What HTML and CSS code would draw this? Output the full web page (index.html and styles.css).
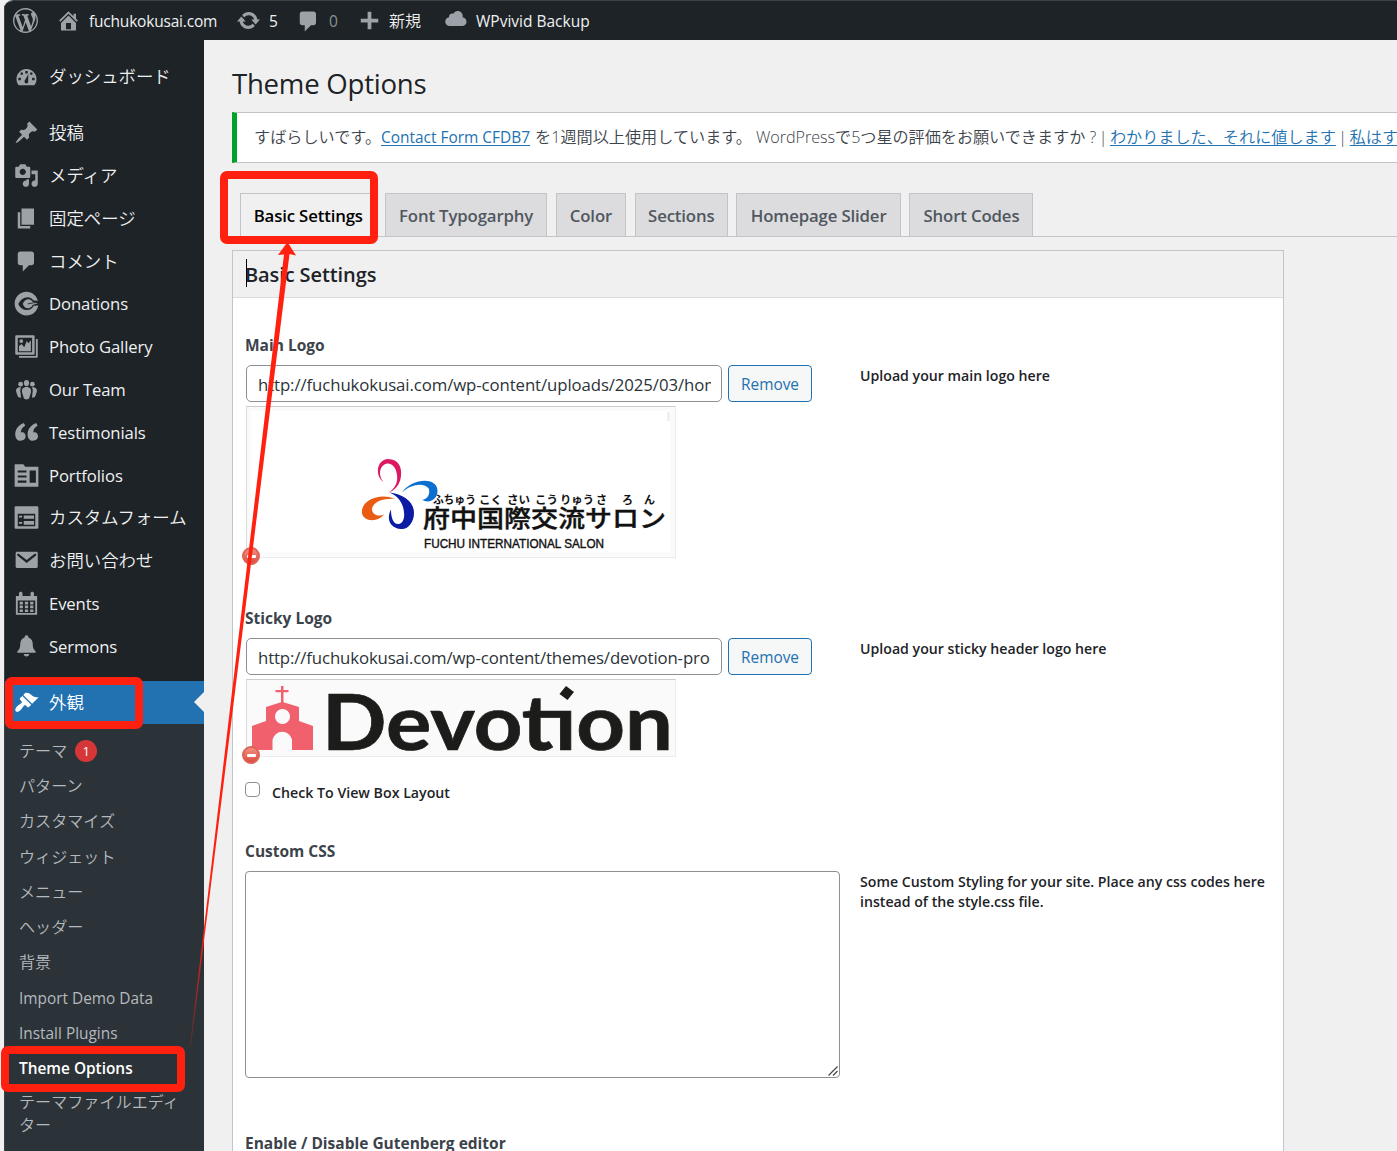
FILE: index.html
```html
<!DOCTYPE html>
<html lang="ja">
<head>
<meta charset="utf-8">
<title>Theme Options</title>
<link rel="stylesheet" href="styles.css">
</head>
<body>
<div class="window">
  <header class="adminbar">
    <svg class="icon wp" viewBox="0 0 20 20"><path d="M20 10c0-5.51-4.49-10-10-10C4.48 0 0 4.49 0 10c0 5.52 4.48 10 10 10 5.51 0 10-4.48 10-10zM7.78 15.37L4.37 6.22c.55-.02 1.17-.08 1.17-.08.5-.06.44-1.13-.06-1.11 0 0-1.45.11-2.37.11-.18 0-.37 0-.58-.01C4.12 2.69 6.87 1.11 10 1.11c2.33 0 4.45.87 6.05 2.34-.68-.11-1.65.39-1.65 1.58 0 .74.45 1.36.9 2.1.35.61.55 1.36.55 2.46 0 1.49-1.4 5-1.4 5l-3.03-8.37c.54-.02.82-.17.82-.17.5-.05.44-1.25-.06-1.22 0 0-1.44.12-2.38.12-.87 0-2.33-.12-2.33-.12-.5-.03-.56 1.2-.06 1.22l.92.08 1.26 3.41zM17.41 10c.24-.64.74-1.87.43-4.25.7 1.29 1.05 2.71 1.05 4.25 0 3.29-1.73 6.24-4.4 7.78.97-2.59 1.94-5.2 2.92-7.78zM6.1 18.09C3.12 16.65 1.11 13.53 1.11 10c0-1.3.23-2.48.72-3.59C3.25 10.3 4.67 14.2 6.1 18.09zm4.03-6.63l2.58 6.98c-.86.29-1.76.45-2.71.45-.79 0-1.57-.11-2.29-.33.81-2.38 1.62-4.74 2.42-7.1z"/></svg>
    <div class="bar-item site"><svg class="icon" viewBox="0 0 20 20"><path d="M16 8.5l1.53 1.53-1.06 1.06L10 4.6l-6.47 6.49-1.06-1.06L10 2.5l4 4v-2h2v4zm-6-2.46l6 5.99V18H4v-5.97zM12 17v-5H8v5h4z"/></svg><span>fuchukokusai.com</span></div>
    <div class="bar-item updates"><svg class="icon" viewBox="0 0 20 20"><path d="M10.2 3.28c3.53 0 6.43 2.61 6.92 6h2.08l-3.5 4-3.5-4h2.32c-.45-1.97-2.21-3.45-4.32-3.45-1.45 0-2.73.71-3.54 1.78L4.95 5.66C6.23 4.2 8.11 3.28 10.2 3.28zm-.4 13.44c-3.52 0-6.43-2.61-6.92-6H.8l3.5-4c1.17 1.33 2.33 2.67 3.5 4H5.48c.45 1.97 2.21 3.45 4.32 3.45 1.45 0 2.73-.71 3.54-1.78l1.71 1.95c-1.28 1.46-3.15 2.38-5.25 2.38z"/></svg><span>5</span></div>
    <div class="bar-item comments"><svg class="icon" viewBox="0 0 20 20"><path d="M5 2h9c1.1 0 2 .9 2 2v7c0 1.1-.9 2-2 2h-2l-5 5v-5H5c-1.1 0-2-.9-2-2V4c0-1.1.9-2 2-2z"/></svg><span class="dim">0</span></div>
    <div class="bar-item new"><svg class="icon" viewBox="0 0 20 20"><path d="M17 8.500v3h-5.500v5.500h-3v-5.500H3v-3h5.500V3h3v5.500z"/></svg><span class="cjk">新規</span></div>
    <div class="bar-item backup"><svg class="icon cloud" viewBox="0 0 20 20"><path d="M14.900 9c1.800.2 3.100 1.700 3.100 3.500 0 1.900-1.600 3.500-3.500 3.500h-10C2.600 16 1 14.400 1 12.500 1 10.700 2.300 9.300 4.100 9 4 8.900 4 8.700 4 8.500 4 7.100 5.100 6 6.500 6c.3 0 .7.1.9.2C8.100 4.900 9.400 4 11 4c2.200 0 4 1.800 4 4 0 .4-.1.700-.1 1z"/></svg><span>WPvivid Backup</span></div>
  </header>

  <div class="body">
    <nav class="sidebar">
      <ul class="menu">
        <li class="cjk first"><svg class="icon" viewBox="0 0 20 20"><path fill-rule="evenodd" d="M3.760 17h12.480C17.580 15.370 18 13.650 18 12c0-4.410-3.580-8-8-8s-8 3.590-8 8c0 1.650.42 3.370 1.760 5zM9 5.500h2v2H9zM5.300 6.800h1.800v1.800H5.300zM12.900 6.800h1.800v1.800h-1.800zM3.500 11h2v2h-2zM14.500 11h2v2h-2zM11.500 8l-.2 5c.5 1.500-.3 2.500-1.300 2.500s-2-1-1.500-2.200z"/></svg><span>ダッシュボード</span></li>
        <li class="cjk"><svg class="icon" viewBox="0 0 20 20"><path d="M10.440 3.020l1.820-1.820 6.360 6.350-1.830 1.820c-1.050-.68-2.480-.57-3.410.36l-.75.75c-.92.93-1.040 2.350-.35 3.410l-1.830 1.820-2.410-2.410-2.800 2.790c-.42.42-3.380 2.710-3.800 2.290s1.860-3.390 2.280-3.810l2.790-2.790L4.100 9.360l1.830-1.820c1.050.69 2.480.57 3.400-.36l.75-.75c.93-.92 1.050-2.350.36-3.410z"/></svg><span>投稿</span></li>
        <li class="cjk"><svg class="icon" viewBox="0 0 20 20"><path d="M13 11V4c0-.55-.45-1-1-1h-1.670L9 1H5L3.670 3H2c-.55 0-1 .45-1 1v7c0 .55.45 1 1 1h10c.55 0 1-.45 1-1zM7 4.500c1.380 0 2.500 1.120 2.500 2.500S8.380 9.500 7 9.500 4.500 8.380 4.500 7 5.620 4.500 7 4.500zM14 6h5v10.500c0 1.380-1.120 2.500-2.500 2.500S14 17.880 14 16.500s1.120-2.500 2.500-2.500c.17 0 .34.02.5.05V9h-3V6zm-4 8.050V13h2v3.500c0 1.380-1.120 2.500-2.500 2.500S7 17.880 7 16.500 8.120 14 9.500 14c.17 0 .34.02.5.05z"/></svg><span>メディア</span></li>
        <li class="cjk"><svg class="icon" viewBox="0 0 20 20"><path d="M6 15V2h10v13H6zm-1 1h8v2H3V5h2v11z"/></svg><span>固定ページ</span></li>
        <li class="cjk"><svg class="icon" viewBox="0 0 20 20"><path d="M5 2h9c1.100 0 2 .9 2 2v7c0 1.100-.9 2-2 2h-2l-5 5v-5H5c-1.100 0-2-.9-2-2V4c0-1.100.9-2 2-2z"/></svg><span>コメント</span></li>
        <li><svg class="icon" viewBox="0 0 20 20"><path fill-rule="evenodd" d="M10 .5C4.700.5.500 4.700.5 10s4.200 9.500 9.500 9.500c4.700 0 8.600-3.300 9.400-8l-3.600.3c-1.200 2.200-3 3.400-5.300 3.400-3.300 0-5.500-1.700-7.100-4.900C5.300 6.900 7.700 5 10.800 5c2 0 3.600.9 4.600 2.300L19.100 8C18.200 3.600 14.500.5 10 .5z"/><path d="M7 10.300C7.800 7.800 9.600 6.500 11.500 6.500c1.600 0 2.700.8 3.300 2L19.400 9.500l-4.500 1.700c-.8 1.700-2 2.500-3.700 2.500-1.900 0-3.300-1.200-4.200-3.400z"/><path d="M11 10.300l8.500-1.500" stroke="#1d2327" stroke-width=".7"/></svg><span>Donations</span></li>
        <li><svg class="icon" viewBox="0 0 20 20"><path fill-rule="evenodd" d="M2 1h13.500c.6 0 1 .4 1 1v13.500c0 .6-.4 1-1 1H2c-.6 0-1-.4-1-1V2c0-.6.4-1 1-1zm1 2v11.500h11.500V3z"/><path d="M4 13.700V9.500l2-1.500 2.200 2.600 2-5 1.300 1.800L13.500 5v8.700zM17.500 4H19v14c0 .6-.4 1-1 1H4v-1.500h13.500z"/><circle cx="5.800" cy="5.600" r="1.500"/></svg><span>Photo Gallery</span></li>
        <li><svg class="icon" viewBox="0 0 20 20"><circle cx="5.300" cy="5.700" r="1.900"/><circle cx="14.700" cy="5.700" r="1.900"/><ellipse cx="10" cy="4.800" rx="2.100" ry="2.500"/><path d="M10 8c3 0 4.100 1.800 3.500 4.300l-1.300 4.500c-.4 1.500-4 1.500-4.400 0l-1.300-4.500C5.900 9.800 7 8 10 8z"/><path d="M5.800 8.200c-2.900-.3-4.700 1.300-4 3.800L3 15.300c.3.800 1.300 1.100 2.600 1.200L5.300 13c-.6-1.800-.3-3.700.5-4.800zM14.200 8.200c2.900-.3 4.700 1.300 4 3.800L17 15.300c-.3.800-1.300 1.100-2.600 1.200l.3-3.500c.6-1.800.3-3.700-.5-4.800z"/></svg><span>Our Team</span></li>
        <li><svg class="icon quote" viewBox="0 0 20 20"><path id="q" d="M9.300 13c0-.8-.2-1.500-.6-2.100-.7-1-2.100-1.200-3.200-1C5.400 7.600 6.800 5.500 9 4.500L7.900 2.300C4 3.700.6 7.200 1 11.900c.2 3 1.900 4.600 4.200 4.600 2.400 0 4.100-1.500 4.100-3.500z"/><use href="#q" x="9.900"/></svg><span>Testimonials</span></li>
        <li><svg class="icon" viewBox="0 0 20 20"><path fill-rule="evenodd" d="M1 1h6.500l1.500 2H19c.5 0 .5.300.5.500V18.500c0 .3-.2.500-.5.500H1c-.3 0-.5-.2-.5-.5V1.500c0-.3.200-.5.500-.5zM3 6v1.500h7V6zm0 4v1.500h7V10zm0 4v1.700h7V14zM12.500 6v9.700h5V6z"/></svg><span>Portfolios</span></li>
        <li class="cjk"><svg class="icon" viewBox="0 0 20 20"><path fill-rule="evenodd" d="M1.500 1h17c.6 0 1 .4 1 1v16c0 .6-.4 1-1 1h-17c-.6 0-1-.4-1-1V2c0-.6.4-1 1-1zM3 7v10h14V7zM4 8.500h2.500V10H4zm3.800-.2H16V11H7.800zM4 13.500h2.500V15H4zm3.800-.7H16v3H7.800z"/></svg><span>カスタムフォーム</span></li>
        <li class="cjk"><svg class="icon" viewBox="0 0 20 20"><path fill-rule="evenodd" d="M2.500 3h15.300c.7 0 1.200.5 1.200 1.200v10.600c0 .7-.5 1.200-1.200 1.200H2.500c-.7 0-1.200-.5-1.200-1.200V4.200c0-.7.5-1.200 1.200-1.200zm.3 1.700c-.5.400-.3 1 .1 1.400l7.200 5.900 7.300-5.900c.4-.4.600-1 .1-1.400-.4-.3-.9-.2-1.200.1l-6.200 4.800L4 4.800c-.3-.3-.8-.4-1.200-.1z"/></svg><span>お問い合わせ</span></li>
        <li><svg class="icon" viewBox="0 0 20 20"><path fill-rule="evenodd" d="M2 4h2V2c0-1.800 2.800-1.800 2.800 0v2h6.400V2c0-1.800 2.800-1.800 2.800 0v2h2.500v15h-17V4zM3 7.500v10h14v-10z"/><path d="M4.500 8.500h2.600v2.200H4.500zm4.200 0h2.600v2.200H8.700zm4.200 0h2.600v2.200h-2.600zM4.500 11.600h2.600v2.200H4.500zm4.200 0h2.600v2.200H8.700zm4.200 0h2.600v2.200h-2.600zM4.500 14.700h2.600v2H4.500zm4.200 0h2.600v2H8.700zm4.200 0h2.600v2h-2.600z"/></svg><span>Events</span></li>
        <li><svg class="icon" viewBox="0 0 20 20"><path d="M10 1c1 0 1.500.7 1.500 1.700C14 3.500 15 5.500 15 8.200c0 3 .8 4.400 2.300 5.600V15H2.700v-1.200C4.200 12.600 5 11.200 5 8.200c0-2.700 1-4.700 3.500-5.500C8.500 1.700 9 1 10 1zM7.800 16h4.400c0 1.200-.9 2-2.200 2s-2.200-.8-2.200-2z"/></svg><span>Sermons</span></li>
        <li class="cjk current"><svg class="icon" viewBox="0 0 20 20"><path d="M14.480 11.060L7.410 3.990l1.500-1.500c.5-.56 2.300-.47 3.510.32 1.210.8 1.430 1.280 2.910 2.100 1.180.64 2.450 1.260 4.450.85zm-.71.71L6.700 4.700 4.930 6.470c-.39.39-.39 1.020 0 1.410l1.060 1.060c.39.39.39 1.030 0 1.420-.6.6-1.430 1.110-2.210 1.690-.35.26-.7.53-1.010.84C1.430 14.230.4 16.080 1.400 17.070c.99 1 2.840-.03 4.180-1.360.31-.31.58-.66.85-1.020.57-.78 1.080-1.610 1.690-2.210.39-.39 1.020-.39 1.410 0l1.060 1.060c.39.39 1.020.39 1.410 0z"/></svg><span>外観</span></li>
      </ul>
      <ul class="submenu">
        <li>テーマ<b class="count">1</b></li>
        <li>パターン</li>
        <li>カスタマイズ</li>
        <li>ウィジェット</li>
        <li>メニュー</li>
        <li>ヘッダー</li>
        <li>背景</li>
        <li class="latin">Import Demo Data</li>
        <li class="latin">Install Plugins</li>
        <li class="latin active">Theme Options</li>
        <li class="wrap">テーマファイルエディター</li>
      </ul>
    </nav>

    <main class="content">
      <h1>Theme Options</h1>
      <div class="notice"><span class="n1">すばらしいです。</span><a class="n2">Contact Form CFDB7</a><span class="n3">を1週間以上使用しています。</span><span class="n4">WordPressで5つ星の評価をお願いできますか ?</span><span class="sep">|</span><a>わかりました、それに値します</a><span class="sep">|</span><a>私はす</a></div>
      <div class="tabs">
        <div class="tab on t1">Basic Settings</div>
        <div class="tab t2">Font Typogarphy</div>
        <div class="tab t3">Color</div>
        <div class="tab t4">Sections</div>
        <div class="tab t5">Homepage Slider</div>
        <div class="tab t6">Short Codes</div>
      </div>
      <section class="panel">
        <h2><i class="caret"></i><span>Basic Settings</span></h2>
        <div class="field main-logo">
          <h3>Main Logo</h3>
          <div class="row">
            <div class="control">
              <div class="upload"><div class="input"><span class="url">http://fuchukokusai.com/wp-content/uploads/2025/03/hom</span></div><div class="button">Remove</div></div>
              <div class="preview">
                <svg class="salon" viewBox="0 0 430 152">
                  <rect x="5" y="5" width="419" height="141" fill="#fff"/>
                  <path d="M422.500 6v9" stroke="#e6eaea" stroke-width="2"/>
                  <path fill="#dc1a64" d="M137.500 76C129 70 130 54 142 53C153 53 156 62 155 70C154 79 149 84 143 86.500C149 82 152 77 151 69C150 60 145 57 141 57.500C133 59 132 70 137.500 76z"/>
                  <path fill="#0b6fd0" d="M156 86.500C165 73 190 70 191.500 84C192 93 184 98 176 94C182 93 184 88 183 83C178 76 165 78 156 86.500z"/>
                  <path fill="#ea5b13" d="M149 93C137 87 118 92 116 104C114 115 131 118 138 108.500C133 111 126 109 126 103C127 96 137 92 149 93z"/>
                  <path fill="#0c1ba4" d="M143 86.500C158 88 168 96 168 107C168 117 161 124 155 123C144 122 140 113 145 103.500C145 113 148 119 153 118C159 116 159 108 157 101C155 94 150 89 143 86.500z"/>
                  <g class="ruby">
                    <text x="187" y="98" textLength="43" lengthAdjust="spacingAndGlyphs">ふちゅう</text><text x="233" y="98" textLength="23" lengthAdjust="spacingAndGlyphs">こく</text><text x="261" y="98" textLength="23" lengthAdjust="spacingAndGlyphs">さい</text><text x="289" y="98" textLength="23" lengthAdjust="spacingAndGlyphs">こう</text><text x="314" y="98" textLength="34" lengthAdjust="spacingAndGlyphs">りゅう</text><text x="350" y="98">さ</text><text x="376" y="98">ろ</text><text x="398" y="98">ん</text>
                  </g>
                  <text class="salon-name" x="177" y="121" textLength="243" lengthAdjust="spacingAndGlyphs">府中国際交流サロン</text>
                  <text class="salon-en" x="178" y="141.500" textLength="180" lengthAdjust="spacingAndGlyphs">FUCHU INTERNATIONAL SALON</text>
                </svg>
                <i class="minus"></i>
              </div>
            </div>
            <p class="desc">Upload your main logo here</p>
          </div>
        </div>
        <div class="field sticky-logo">
          <h3>Sticky Logo</h3>
          <div class="row">
            <div class="control">
              <div class="upload"><div class="input"><span class="url tight">http://fuchukokusai.com/wp-content/themes/devotion-pro</span></div><div class="button">Remove</div></div>
              <div class="preview">
                <svg class="devotion" viewBox="0 0 430 78">
                  <path fill="#f0616d" fill-rule="evenodd" d="M35 7h2.500v4H42.500v2.200h-5v10L53 28v14l14 5v24H46V60.500a10 10 0 0 0-19.500 0V71H6V47l14-5V28l15-4.800V13.200h-5.500V11H35zM36.500 30a7.500 7.500 0 1 0 .01 0z"/>
                  <text x="76" y="70.500" textLength="351" lengthAdjust="spacingAndGlyphs">Devot&#305;on</text>
                  <path fill="#1c1c1a" d="M320 7l8 6-6.500 8-8-6z"/>
                </svg>
                <i class="minus"></i>
              </div>
            </div>
            <p class="desc">Upload your sticky header logo here</p>
          </div>
          <label class="check"><i class="box"></i><span>Check To View Box Layout</span></label>
        </div>
        <div class="field custom-css">
          <h3>Custom CSS</h3>
          <div class="row">
            <div class="textarea"><svg viewBox="0 0 10 10"><path d="M.5 9.500l9-9M5 9.500L9.500 5" stroke="#444" stroke-width="1.200" fill="none"/></svg></div>
            <p class="desc">Some Custom Styling for your site. Place any css codes here<br>instead of the style.css file.</p>
          </div>
        </div>
        <div class="field gutenberg"><h3>Enable / Disable Gutenberg editor</h3></div>
      </section>
    </main>
  </div>
</div>

<svg class="annotations" viewBox="0 0 1397 1151">
  <defs><linearGradient id="fade" gradientUnits="userSpaceOnUse" x1="190" y1="1050" x2="203" y2="925"><stop offset="0" stop-color="#ff2010" stop-opacity=".15"/><stop offset="1" stop-color="#ff2010"/></linearGradient></defs>
  <path d="M189.800 1047L284 254.500l-6 .5 9.500-13 8.500 13.500-6.500-1.500L190.800 1047z" fill="url(#fade)"/>
  <g fill="none" stroke="#ff2010" stroke-width="8">
    <rect x="224" y="175" width="150" height="65" rx="3"/>
    <rect x="9" y="681" width="130" height="44" rx="3"/>
    <rect x="5" y="1050" width="176" height="38" rx="3"/>
  </g>
</svg>
</body>
</html>
```
FILE: styles.css
```css
* { box-sizing: border-box; }
body {
  margin: 0;
  width: 1397px;
  height: 1151px;
  overflow: hidden;
  position: relative;
  background: #f0f0f1;
  color: #3c434a;
  font-family: "Open Sans", "Noto Sans CJK JP", sans-serif;
  font-size: 16px;
}
ul, h1, h2, h3, p { margin: 0; padding: 0; list-style: none; }
.window { margin-left: 4px; width: 1393px; height: 1151px; border-top: 1px solid #3b4246; border-radius: 9px 0 0 0; overflow: hidden; background: #f0f0f0; }
.icon { width: 25px; height: 25px; fill: #9ca2a7; flex: none; display: block; }
.cjk, .submenu, .notice { font-family: "Open Sans", "Noto Sans CJK JP", sans-serif; font-weight: 350; }

.adminbar { height: 39px; background: #1d2327; color: #f0f0f1; display: flex; align-items: center; border-left: 1px solid #3b4246; }
.bar-item { display: flex; align-items: center; white-space: nowrap; font-size: 15.500px; line-height: 38px; }
.wp { margin-left: 8px; }
.bar-item.site { margin-left: 18px; gap: 8px; width: 180px; letter-spacing: -.2px; }
.bar-item.updates { gap: 8px; width: 60px; }
.bar-item.comments { gap: 8px; width: 61px; }
.comments .icon { width: 25px; margin-top: 2px; }
.bar-item.new { gap: 7px; width: 87px; }
.bar-item.backup { gap: 7px; }
.cloud { margin-top: -5px; }
.dim { color: #8c9196; }
.adminbar .cjk { font-weight: 350; font-size: 16px; }

.body { display: flex; height: 1111px; }
.sidebar { width: 200px; background: #2c3338; flex: none; border-left: 1px solid #3b4246; }
.menu { background: #1d2327; color: #f0f0f1; padding-top: 15px; }
.menu li { display: flex; align-items: center; gap: 10px; height: 42.800px; padding-left: 9px; font-size: 16.700px; letter-spacing: -.12px; white-space: nowrap; }
.menu li.cjk { font-size: 17.400px; letter-spacing: 0; }
.menu li.cjk span { margin-top: -2px; }
.menu li.first { margin-bottom: 13.500px; }
.menu li.current { margin-top: 13.400px; background: #2271b1; color: #fff; position: relative; }
.menu li.current .icon { fill: #fff; }
.menu li.current::after { content: ""; position: absolute; right: 0; top: 11px; border: 10px solid transparent; border-left-width: 0; border-right-color: #f0f0f0; }
.submenu { padding-top: 10px; color: #b4b9be; font-size: 16.100px; }
.submenu li { height: 35.250px; line-height: 35px; padding-left: 14px; display: flex; align-items: center; white-space: nowrap; }
.submenu .latin { font-weight: 400; font-size: 15.400px; }
.submenu .active { font-weight: 600; color: #fff; }
.submenu li.wrap { display: block; height: 50px; line-height: 23px; padding-top: 5px; width: 176px; white-space: normal; word-break: break-all; }
.count { width: 22px; height: 22px; margin-left: 8px; border-radius: 50%; background: #d63638; color: #fff; font-size: 13px; line-height: 22px; text-align: center; font-weight: 400; }

.content { flex: 1; min-width: 0; padding-left: 28px; overflow: hidden; }
h1 { color: #1d2327; font-weight: 400; font-size: 27.600px; letter-spacing: -.25px; line-height: 38px; padding-top: 24px; height: 72px; white-space: nowrap; }
.notice { height: 51px; border: 1px solid #c3c4c7; border-left: 5px solid #00a32a; border-right: 0; background: #fff; display: flex; align-items: baseline; padding: 12px 0 0 17px; line-height: 24px; white-space: nowrap; font-size: 16.150px; overflow: hidden; color: #3c434a; }
.notice a { color: #2271b1; text-decoration: underline; text-underline-offset: 2px; }
.notice .n2 { font-weight: 400; font-size: 15.450px; }
.n3 { margin-left: 5px; }
.n4 { margin-left: 4px; letter-spacing: -.04px; }
.sep { margin: 0 2.500px; }
.tabs { display: flex; align-items: flex-end; gap: 8.600px; height: 74px; padding-left: 8px; border-bottom: 1px solid #c3c4c7; }
.tab { height: 43px; border: 1px solid #c3c4c7; border-bottom: 0; background: #dcdcde; color: #50575e; font-weight: 600; font-size: 16.800px; letter-spacing: -.15px; line-height: 43px; text-align: center; white-space: nowrap; }
.tab.on { background: #f0f0f1; color: #000; margin-bottom: -1px; height: 44px; }
.t1 { width: 136.500px; } .t2 { width: 162px; } .t3 { width: 70.500px; } .t4 { width: 93px; } .t5 { width: 164.500px; } .t6 { width: 124px; }

.panel { width: 1052px; height: 920px; margin-top: 13px; border: 1px solid #c3c4c7; background: #fff; }
.panel h2 { display: flex; align-items: center; height: 47px; background: #f0f0f1; border-bottom: 1px solid #dcdcde; color: #1d2327; font-size: 20px; letter-spacing: -.1px; font-weight: 600; padding-left: 13px; }
.panel h2 span { margin-left: -1px; }
.caret { width: 1px; height: 28px; background: #000; margin-right: -1px; margin-top: -2px; }
.field { padding-left: 12px; }
h3 { font-size: 15.500px; font-weight: 700; color: #3c434a; line-height: 20px; height: 30px; white-space: nowrap; }
.main-logo { padding-top: 37px; height: 310px; }
.row { display: flex; }
.control { width: 615px; padding-left: 1px; }
.upload { display: flex; gap: 6px; height: 37px; }
.input { width: 476px; border: 1px solid #8c8f94; border-radius: 5px; padding: 0 10px 0 11px; color: #2c3338; font-size: 16.800px; letter-spacing: -.1px; line-height: 37px; }
.url { display: block; overflow: hidden; white-space: nowrap; height: 35px; }
.url.tight { letter-spacing: -.13px; }
.button { width: 84px; border: 1px solid #2271b1; border-radius: 4px; background: #f6f7f7; color: #2271b1; font-size: 15.400px; line-height: 37px; text-align: center; }
.desc { color: #1d2327; font-size: 14.150px; line-height: 20px; font-weight: 600; white-space: nowrap; padding-top: 1px; }
.preview { margin-top: 4px; width: 430px; border: 1px solid #ececec; border-top-color: #ccc; border-left-color: #ddd; background: #fafafa; position: relative; }
.preview svg { display: block; margin: -1px; width: 430px; }
.minus { position: absolute; left: -5px; bottom: -8px; width: 18px; height: 18px; border-radius: 50%; background: linear-gradient(#f29080, #dc4c40); border: 2px solid #dc6458; display: flex; align-items: center; justify-content: center; }
.minus::after { content: ""; width: 9px; height: 3px; background: #fff; border-radius: 1px; }
.salon text { font-family: "Noto Sans CJK JP", sans-serif; fill: #111; }
.salon .ruby text { font-size: 11px; font-weight: 700; }
.salon .salon-name { font-size: 24px; font-weight: 500; stroke: #111; stroke-width: .4px; }
.salon .salon-en { font-family: "Liberation Sans", sans-serif; font-size: 12.500px; stroke: #111; stroke-width: .4px; }
.devotion text { font-family: Lato, sans-serif; font-weight: 700; font-size: 77px; fill: #1c1c1a; stroke: #1c1c1a; stroke-width: .7px; }
.sticky-logo { height: 233px; }
.check { display: flex; align-items: center; gap: 12px; height: 22px; margin-top: 24px; color: #1d2327; font-weight: 600; font-size: 14.200px; white-space: nowrap; }
.box { width: 15px; height: 15px; border: 1px solid #8c8f94; border-radius: 4px; background: #fff; margin-top: -5px; }
.custom-css { height: 292px; }
.textarea { width: 595px; height: 207px; border: 1px solid #8c8f94; border-radius: 4px; margin-right: 20px; display: flex; align-items: flex-end; justify-content: flex-end; padding: 1px; }
.textarea svg { width: 10px; height: 10px; }
.annotations { position: absolute; left: 0; top: 0; width: 1397px; height: 1151px; pointer-events: none; }
```
